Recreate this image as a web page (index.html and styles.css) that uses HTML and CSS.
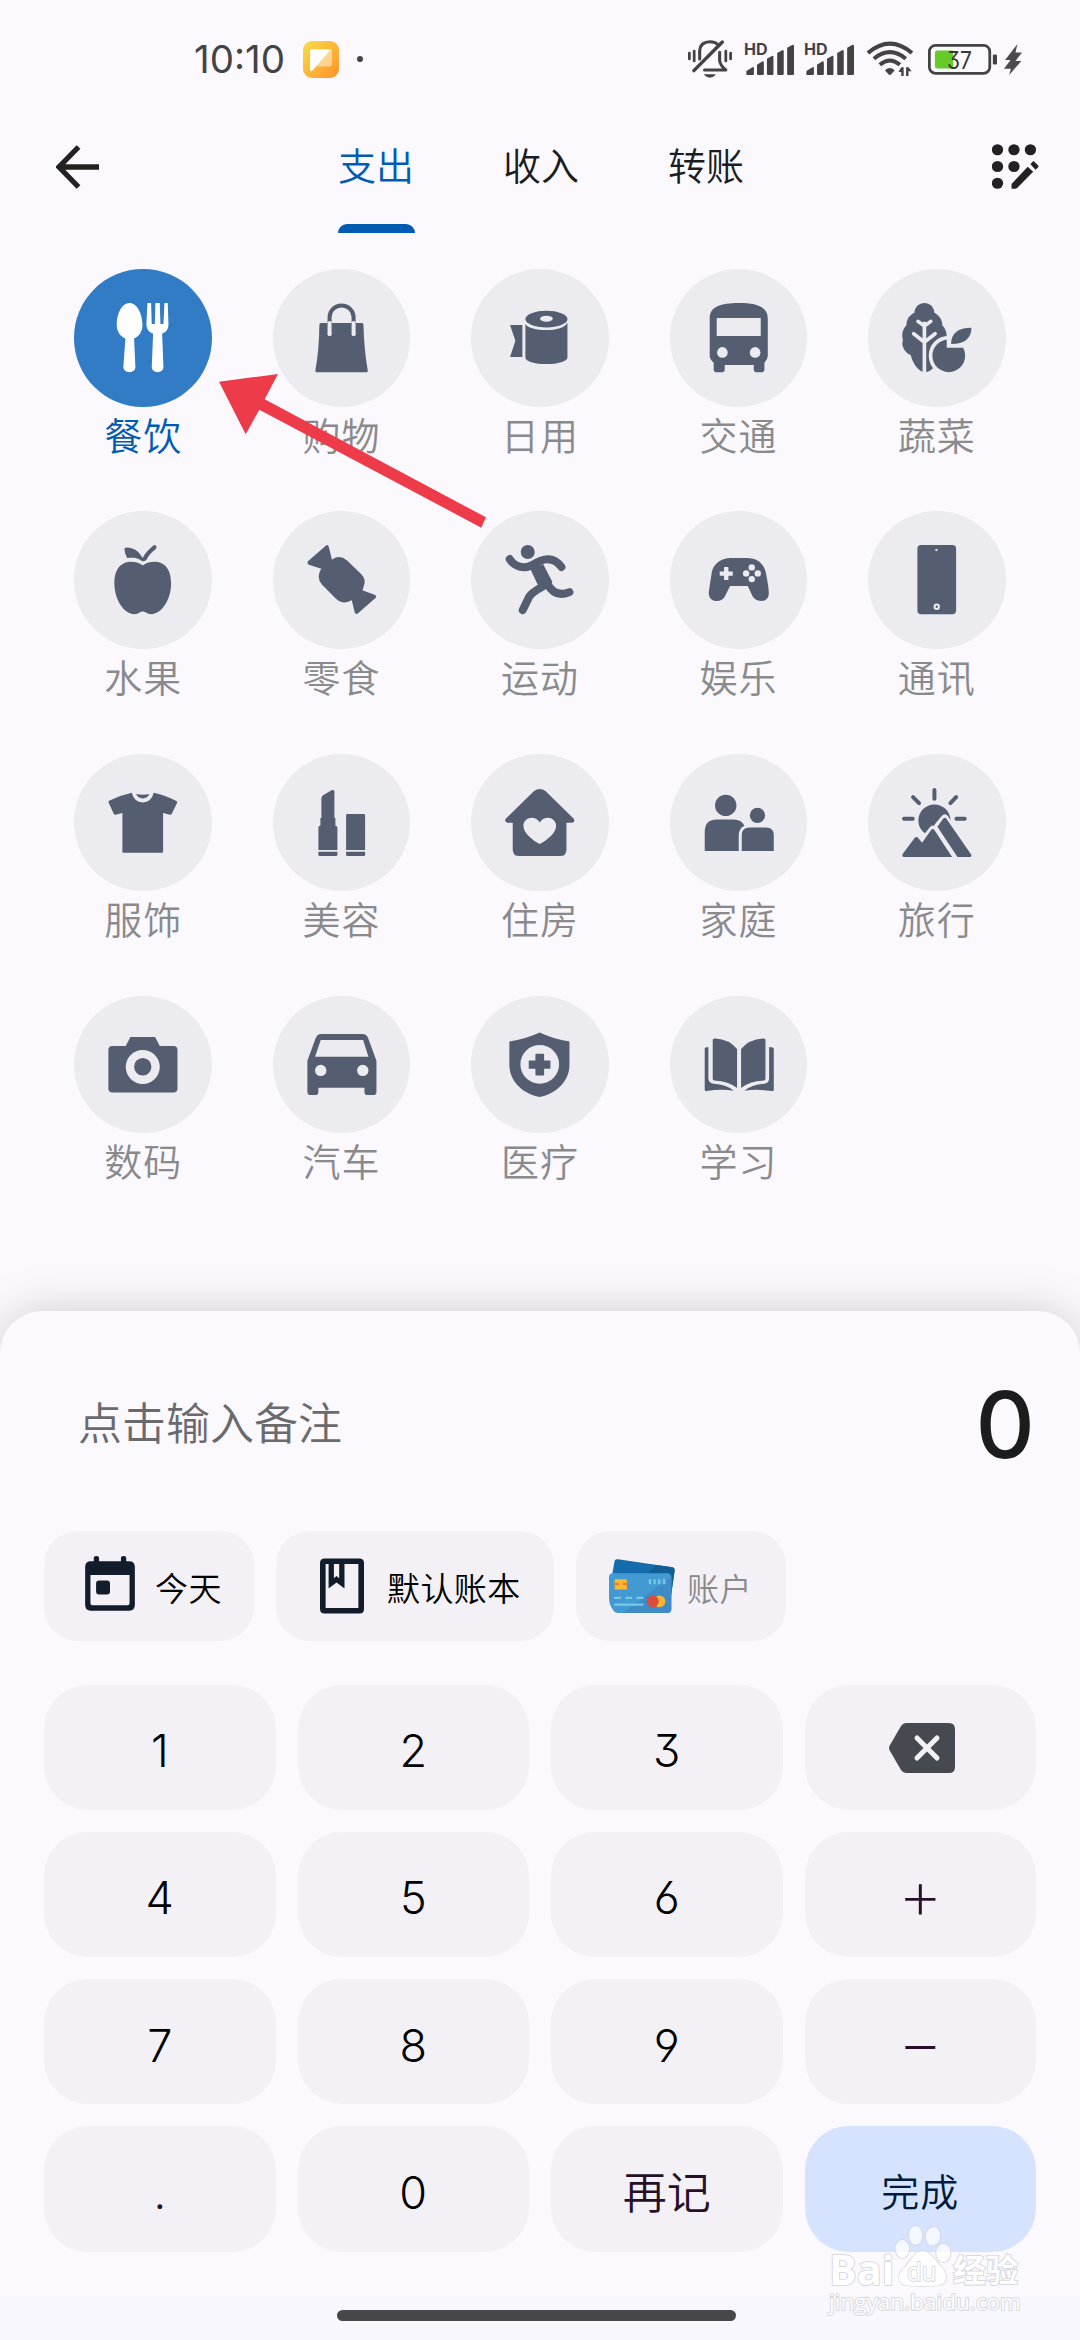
FILE: index.html
```html
<!DOCTYPE html>
<html lang="zh-CN">
<head>
<meta charset="utf-8">
<title>记账</title>
<link rel="stylesheet" href="styles.css">
</head>
<body>
<div class="status">
  <div class="status-left">
    <span class="time">10:10</span>
    <svg class="app-icon" viewBox="0 0 36 37"><defs><linearGradient id="ag" x1="0" y1="0" x2="1" y2="1"><stop offset="0" stop-color="#f9dd4a"/><stop offset="1" stop-color="#ff9028"/></linearGradient></defs><rect width="36" height="37" rx="9" fill="url(#ag)"/><path d="M12 25.500H26.500Q29 25.500 29 23V8.500H26Z" fill="#fff" opacity=".45"/><path d="M7 10Q7 8.200 9 8.200H28L9.500 29.500Q7 31.500 7 28.500Z" fill="#fffdf6"/></svg>
    <span class="dot"></span>
  </div>
  <div class="status-right">
    <svg class="bell" viewBox="430 120 128 120" preserveAspectRatio="none"><g fill="none" stroke="#434345" stroke-width="9" stroke-linecap="round"><path d="M464 180V155Q466 128 494 128Q508 128 515 135M522 160V185Q524 200 540 213H478" stroke-linejoin="round"/><path d="M447 215L530 129" stroke-width="10"/><path d="M434 162V180M448 156V186M540 156V186M554 162V180" stroke-width="8"/></g><path d="M476 226H511Q504 236 494 236Q483 236 476 226Z" fill="#434345"/></svg>
    <svg class="signal" viewBox="592 126 146 102" preserveAspectRatio="none"><text x="592" y="164" class="hd" textLength="69" lengthAdjust="spacingAndGlyphs">HD</text><g fill="#434345"><path d="M599 225V213L618 201Q621 201 621 204V222Q621 225 618 225ZM630 222V194L646 184Q650 184 650 188V222Q650 225 646 225H633Q630 225 630 222ZM659 222V176L675 167Q678 167 678 170V222Q678 225 675 225H662Q659 225 659 222ZM689 222V159L705 150Q708 150 708 153V222Q708 225 705 225H692Q689 225 689 222ZM718 222V143L734 134Q738 134 738 138V222Q738 225 734 225H721Q718 225 718 222Z"/></g></svg>
    <svg class="signal signal-2" viewBox="592 126 146 102" preserveAspectRatio="none"><text x="592" y="164" class="hd" textLength="69" lengthAdjust="spacingAndGlyphs">HD</text><g fill="#434345"><path d="M599 225V213L618 201Q621 201 621 204V222Q621 225 618 225ZM630 222V194L646 184Q650 184 650 188V222Q650 225 646 225H633Q630 225 630 222ZM659 222V176L675 167Q678 167 678 170V222Q678 225 675 225H662Q659 225 659 222ZM689 222V159L705 150Q708 150 708 153V222Q708 225 705 225H692Q689 225 689 222ZM718 222V143L734 134Q738 134 738 138V222Q738 225 734 225H721Q718 225 718 222Z"/></g></svg>
    <svg class="wifi" viewBox="950 126 133 108" preserveAspectRatio="none"><g fill="none" stroke="#434345" stroke-width="12"><path d="M953 162Q1016 106 1080 162M970 179Q1016 140 1062 179M987 197Q1016 172 1045 197"/></g><path d="M1002 214Q1016 200 1030 214L1020 226Q1016 230 1012 226ZM1049 205H1056V231H1049V219H1041ZM1063 231V205H1070L1079 217H1070V231Z" fill="#434345"/></svg>
    <svg class="battery" viewBox="1127 131 200 92" preserveAspectRatio="none"><rect x="1131" y="135" width="175" height="83" rx="18" fill="none" stroke="#434345" stroke-width="8"/><path d="M1154 150H1200V204H1154Q1147 204 1147 197V157Q1147 150 1154 150Z" fill="#66cb28"/><rect x="1315" y="162" width="12" height="30" rx="4" fill="#434345"/><text class="level" x="1182" y="204" textLength="72" lengthAdjust="spacingAndGlyphs">37</text></svg>
    <svg class="bolt" viewBox="1347 131 52 91" preserveAspectRatio="none"><path d="M1386 131L1350 178H1366L1347 204H1367L1362 222L1397 181H1380L1399 156H1380Z" fill="#4b4b4d"/></svg>
  </div>
</div>

<header class="header">
  <svg class="back" viewBox="0 0 43 44"><path d="M22.500 2L3 22L22.500 42M3 22H43" fill="none" stroke="#222" stroke-width="5.300"/></svg>
  <nav class="tabs"><span class="tab active">支出</span><span class="tab">收入</span><span class="tab">转账</span></nav>
  <svg class="edit" viewBox="1312 434 137 134" preserveAspectRatio="none"><g fill="#222"><circle cx="1328" cy="451" r="16.500"/><circle cx="1376" cy="451" r="16.500"/><circle cx="1424" cy="451" r="16.500"/><circle cx="1328" cy="501" r="16.500"/><circle cx="1376" cy="501" r="16.500"/><circle cx="1328" cy="551" r="16.500"/></g><path d="M1362 548L1430 478L1456 502L1390 574" fill="#fbf9fe"/><path d="M1369 553L1416 502L1432 517L1386 564Q1383 567 1379 567H1369ZM1424 494L1430 487Q1433 484 1437 488L1446 497Q1449 501 1446 504L1439 511Z" fill="#222"/></svg>
</header>

<main class="grid">
  <div class="cat selected"><svg viewBox="74 57 412 412"><path d="M240 159C262 159 279 190 279 224C279 246 268 260 254 265L258 350C258 360 250 366 240 366C230 366 222 360 222 350L228 265C214 260 202 246 202 224C202 190 218 159 240 159ZM294 159H305L307 222H316L318 159H331L333 222H342L345 159H355L357 222C357 238 350 247 338 251L342 350C342 360 334 366 325 366C315 366 307 360 307 350L311 251C299 247 291 238 291 222Z"/></svg><span>餐饮</span></div>
  <div class="cat"><svg viewBox="668 57 412 412"><path d="M807 224Q807 219 812 219H934Q939 219 939 224Q941 300 952 361Q953 366 948 366H799Q794 366 795 361Q806 300 807 224Z"/><path class="line" stroke-width="12" d="M837.500 219V202A36 36 0 0 1 909.500 202V219"/><path class="line cut" stroke-width="12" stroke-linecap="butt" d="M837.500 219V252M909.500 219V252"/><circle class="hole" cx="837.500" cy="252" r="6"/><circle class="hole" cx="909.500" cy="252" r="6"/></svg><span>购物</span></div>
  <div class="cat"><svg viewBox="1265 57 412 412"><path d="M1382 225H1419V321H1382L1398 272ZM1428 222C1436 234 1460 240 1491 240C1522 240 1546 233 1554 218V322C1554 334 1525 342 1491 342C1455 342 1428 334 1428 322Z"/><ellipse cx="1491" cy="207" rx="63" ry="25"/><ellipse class="hole" cx="1491" cy="206" rx="19" ry="9"/></svg><span>日用</span></div>
  <div class="cat"><svg viewBox="388 57 412 412"><path d="M507 205C507 170 540 159 594 159C648 159 681 170 681 205V318Q681 328 671 338V358Q671 366 663 366H647Q639 366 639 358V345H552V358Q552 366 544 366H527Q519 366 519 358V338Q507 328 507 318Z"/><path class="hole" d="M528 204H660V258H528Z"/><circle class="hole" cx="545" cy="307" r="16"/><circle class="hole" cx="643" cy="307" r="16"/></svg><span>交通</span></div>
  <div class="cat"><svg viewBox="986 57 412 412"><path d="M1155 159C1170 159 1184 170 1185 188C1196 194 1209 206 1209 226C1218 234 1222 246 1222 262L1200 310L1180 355Q1170 366 1155 366C1138 366 1120 340 1114 315C1098 308 1089 292 1089 280C1089 272 1092 268 1089 262C1087 245 1094 232 1101 226C1101 206 1112 194 1125 188C1126 170 1140 159 1155 159Z"/><path class="line cut" stroke-width="11" stroke-linecap="butt" d="M1155 220V368M1136 214L1155 228L1174 214M1123 251L1155 276L1187 251"/><circle class="hole" cx="1228" cy="317" r="60"/><circle cx="1228" cy="317" r="49"/><path class="hole" d="M1222 262H1290V288L1266 293H1222Z"/><path d="M1235 282C1235 250 1255 233 1296 233C1296 265 1275 282 1235 282Z"/></svg><span>蔬菜</span></div>

  <div class="cat"><svg viewBox="74 783 412 412"><path d="M280 946C300 930 365 920 365 1000C365 1050 335 1092 305 1092C293 1092 288 1084 280 1084C272 1084 267 1092 255 1092C225 1092 195 1050 195 1000C195 920 260 930 280 946ZM225 897Q225 892 232 892C255 893 270 905 280 924C285 912 295 900 311 887Q316 883 320 887Q323 892 319 897C305 908 297 918 292 928Q282 938 273 930C262 922 248 922 233 924Q226 910 225 897Z"/></svg><span>水果</span></div>
  <div class="cat"><svg viewBox="668 783 412 412"><path d="M845 928Q868 912 890 931L932 972Q948 988 940 1008L936 1022L905 1050Q878 1066 856 1045L815 1004Q796 984 812 957ZM772 934L826 887Q833 882 835 890L845 930L815 957L775 944Q769 940 772 934ZM934 1020L974 1035Q980 1039 975 1044L922 1090Q915 1094 913 1087L903 1047Z"/></svg><span>零食</span></div>
  <div class="cat"><svg viewBox="20 33 412 412"><circle cx="190" cy="156" r="21"/><path class="line" stroke-width="24" d="M136 177C150 200 178 209 204 195C240 170 270 171 291 201M175 330L194 291Q200 278 235 259M248 250Q272 295 315 276"/><path d="M197 205L236 192L264 246L248 268L220 254Z"/></svg><span>运动</span></div>
  <div class="cat"><svg viewBox="388 783 412 412"><path d="M570 924H620C652 924 670 944 675 967Q684 1010 684 1030C684 1045 674 1053 660 1053C648 1053 640 1046 635 1038L621 1008H568L553 1038C548 1048 540 1053 528 1053C514 1053 504 1044 504 1028Q508 1000 513 967C518 944 538 924 570 924Z"/><path class="hole" d="M550 951H563V964H576V977H563V990H550V977H537V964H550Z"/><g class="hole"><circle cx="633" cy="952" r="9.500"/><circle cx="633" cy="987" r="9.500"/><circle cx="616" cy="970" r="9.500"/><circle cx="651" cy="970" r="9.500"/></g></svg><span>娱乐</span></div>
  <div class="cat"><svg viewBox="986 783 412 412"><rect x="1134" y="885" width="116" height="207" rx="11"/><rect class="hole" x="1188" y="897" width="6" height="6"/><circle class="line cut" cx="1192" cy="1070" r="6.500" stroke-width="6"/></svg><span>通讯</span></div>

  <div class="cat"><svg viewBox="74 42 412 412"><path d="M247 158Q210 166 179 182Q176 184 178 188L193 221Q195 225 199 224L219 219V335Q219 338 222 338H338Q341 338 341 335V219L361 224Q365 225 367 221L383 188Q384 184 381 183Q350 166 313 158Q306 186 280 187Q254 186 247 158Z"/><path d="M260 162Q280 166 300 162Q294 175 280 175Q266 175 260 162Z"/></svg><span>服饰</span></div>
  <div class="cat"><svg viewBox="668 42 412 412"><path d="M813 175Q814 168 819 165L845 150Q852 148 852 154V234H855V258Q861 258 861 262V330H804V262Q804 258 810 256V234H813ZM804 335H861V344Q861 348 857 348H808Q804 348 804 344ZM887 330V226Q887 222 891 222H940Q944 222 944 226V330ZM887 335H944V344Q944 348 940 348H891Q887 348 887 344Z"/></svg><span>美容</span></div>
  <div class="cat"><svg viewBox="1265 42 412 412"><path d="M1471 147Q1480 147 1488 153L1573 236Q1578 247 1568 248H1551V328Q1551 348 1531 348H1410Q1390 348 1390 328V248H1374Q1364 245 1369 236L1454 153Q1462 147 1471 147Z"/><path class="hole" d="M1471 312C1450 300 1422 280 1422 257C1422 233 1455 222 1471 247C1487 222 1520 233 1520 257C1520 280 1492 300 1471 312Z"/></svg><span>住房</span></div>
  <div class="cat"><svg viewBox="388 42 412 412"><circle cx="555" cy="196" r="32"/><circle cx="650" cy="226" r="23"/><path d="M492 333V275Q492 238 529 238H578Q602 238 611 257Q594 265 594 285V333ZM603 333V285Q603 262 626 262H676Q699 262 699 285V333Z"/></svg><span>家庭</span></div>
  <div class="cat"><svg viewBox="986 42 412 412"><circle cx="1185" cy="241" r="48"/><path class="line" stroke-width="12" d="M1185 150V176M1121 171L1139 189M1250 171L1233 189M1094 236H1120M1251 236H1276"/><g stroke="#ebebf0" stroke-width="22" stroke-linejoin="round"><path d="M1094 351L1131 293L1148 308L1180 268L1238 351ZM1194 260L1216 234L1290 351H1254Z"/></g><path d="M1094 351Q1086 350 1090 342L1126 293Q1131 288 1136 293L1148 308L1175 270Q1180 264 1185 270L1238 351ZM1194 260L1211 236Q1216 230 1221 236L1295 343Q1298 350 1290 351H1254Z"/></svg><span>旅行</span></div>

  <div class="cat"><svg viewBox="74 768 412 412"><path d="M189 918H229L243 891H317L331 918H372Q384 918 384 930V1045Q384 1057 372 1057H189Q177 1057 177 1045V930Q177 918 189 918Z"/><circle class="hole" cx="280" cy="981" r="51"/><circle cx="280" cy="980" r="26"/></svg><span>数码</span></div>
  <div class="cat"><svg viewBox="668 768 412 412"><path d="M796 894Q801 882 812 882H936Q948 882 953 894L978 962V1055Q978 1065 968 1065H952Q942 1065 942 1055V1043H804V1055Q804 1065 794 1065H781Q771 1065 771 1055V962Z"/><path class="hole" d="M811 900H938L954 950H794Z"/><circle class="hole" cx="811" cy="991" r="17"/><circle class="hole" cx="937" cy="991" r="17"/></svg><span>汽车</span></div>
  <div class="cat"><svg viewBox="1265 768 412 412"><path d="M1471 877Q1510 896 1560 904V975C1560 1020 1525 1060 1471 1071C1415 1060 1380 1020 1380 975V904Q1430 896 1471 877Z"/><circle class="hole" cx="1471" cy="973" r="58"/><path d="M1460 941H1482Q1484 941 1484 943V961H1501Q1503 961 1503 963V984Q1503 986 1501 986H1484V1004Q1484 1006 1482 1006H1460Q1458 1006 1458 1004V986H1440Q1438 986 1438 984V963Q1438 961 1440 961H1458V943Q1458 941 1460 941Z"/></svg><span>医疗</span></div>
  <div class="cat"><svg viewBox="388 768 412 412"><path d="M516 899Q516 895 524 895Q565 897 589 927V1044Q565 1023 520 1021Q516 1020 516 1016ZM674 899Q674 895 666 895Q625 897 601 927V1044Q625 1023 670 1021Q674 1020 674 1016ZM492 926Q492 921 503 921V1014Q503 1029 518 1031Q560 1034 579 1052Q540 1046 498 1053Q492 1054 492 1048ZM699 926Q699 921 685 921V1014Q685 1029 672 1031Q632 1034 611 1052Q650 1046 693 1053Q699 1054 699 1048Z"/></svg><span>学习</span></div>
</main>

<section class="sheet">
  <div class="note"><span>点击输入备注</span><strong>0</strong></div>
  <div class="chips">
    <div class="chip"><svg class="cal" viewBox="135 77 150 166"><path fill="#131c2b" fill-rule="evenodd" d="M152 93H161V84Q161 77 169 77Q177 77 177 84V93H243V84Q243 77 251 77Q259 77 259 84V93H268Q285 93 285 110V225Q285 242 268 242H152Q135 242 135 225V110Q135 93 152 93ZM151 134V218Q151 226 159 226H261Q269 226 269 218V134ZM177 151H201Q210 151 210 160V184Q210 193 201 193H177Q168 193 168 184V160Q168 151 177 151Z"/></svg><span>今天</span></div>
    <div class="chip chip-book"><svg class="ledger" viewBox="841 84 133 167"><path fill="#131c2b" fill-rule="evenodd" d="M855 84H960Q974 84 974 98V237Q974 251 960 251H855Q841 251 841 237V98Q841 84 855 84ZM858 101V234H957V101H915V175L891 157L867 175V101ZM883 101V144L891 137L899 144V101Z"/></svg><span>默认账本</span></div>
    <div class="chip chip-acct"><svg class="card" viewBox="87 86 199 163"><path d="M104 91Q107 86 114 87L278 111Q286 113 285 121L273 205L97 130Z" fill="#146cac"/><path d="M204 130L230 104L278 111Q286 113 285 121L273 205Z" fill="#125f98"/><path d="M99 129H262Q275 129 275 141V237Q275 249 262 249H114Q104 249 99 240Q87 222 87 205V141Q87 129 99 129Z" fill="#4399d2"/><path d="M128 249L275 140V237Q275 249 262 249Z" fill="#3f8bc8"/><rect x="104" y="147" width="37" height="31" rx="2" fill="#fdb62f"/><path d="M104 158H116V165H104ZM129 158H141V165H129Z" fill="#f07c2b"/><path d="M207 147H214V162H207ZM221 147H228V162H221ZM235 147H242V162H235ZM250 147H257V162H250ZM102 200H123V207H102ZM136 200H157V207H136ZM170 200H191V207H170ZM102 220H191V227H102Z" fill="#76c9e3"/><circle cx="239" cy="214" r="18" fill="#fdb62f"/><circle cx="219" cy="214" r="18" fill="#dc4c3c"/></svg><span>账户</span></div>
  </div>
  <div class="keys">
    <div class="key">1</div><div class="key">2</div><div class="key">3</div>
    <div class="key"><svg class="del" viewBox="0 0 66 50"><path d="M17 0H60Q66 0 66 6V44Q66 50 60 50H17Q14 50 12 47L1 28Q-1 25 1 22L12 3Q14 0 17 0Z" fill="#464a50"/><path d="M28 15L48 35M48 15L28 35" stroke="#f3f1f6" stroke-width="5" stroke-linecap="round"/></svg></div>
    <div class="key">4</div><div class="key">5</div><div class="key">6</div><div class="key op">+</div>
    <div class="key">7</div><div class="key">8</div><div class="key">9</div><div class="key op">−</div>
    <div class="key point">.</div><div class="key">0</div><div class="key again">再记</div><div class="key done">完成</div>
  </div>
  <div class="navbar"><span class="home"></span></div>
</section>

<svg class="arrow" viewBox="507 372 802 462"><path d="M507 395L684 372L644 448L1308 802L1294 833L628 479L587 553Z" fill="#ed3b49"/></svg>

<svg class="mark" viewBox="140 365 590 290">
  <g fill="#fff" stroke="#d2d2da" stroke-width="4" paint-order="stroke"><g fill-opacity=".75"><ellipse cx="366" cy="446" rx="21" ry="28"/><ellipse cx="406" cy="405" rx="20" ry="29"/><ellipse cx="458" cy="408" rx="22" ry="28" transform="rotate(8 458 408)"/><ellipse cx="489" cy="458" rx="22" ry="28"/></g><path d="M427 452C450 452 462 478 480 496C510 525 500 555 468 556C450 557 400 557 386 556C352 555 345 525 374 500C392 480 402 452 427 452Z"/></g>
  <text class="wm bai" x="146" y="553" textLength="196" lengthAdjust="spacingAndGlyphs">Bai</text>
  <text class="wm du" x="380" y="541" textLength="88" lengthAdjust="spacingAndGlyphs">du</text>
  <text class="wm exp" x="518" y="545" textLength="196" lengthAdjust="spacingAndGlyphs">经验</text>
  <text class="wm url" x="146" y="630" textLength="576" lengthAdjust="spacingAndGlyphs">jingyan.baidu.com</text>
</svg>
</body>
</html>
```
FILE: styles.css
```css
* { box-sizing: border-box; }
body {
  margin: 0;
  width: 1080px;
  height: 2340px;
  display: flex;
  flex-direction: column;
  position: relative;
  overflow: hidden;
  background: #fbf9fe;
  color: #1a1c1e;
  font-family: Inter, "Noto Sans CJK SC", sans-serif;
}
svg { display: block; flex: none; }

.status {
  height: 118px;
  flex: none;
  display: flex;
  justify-content: space-between;
  padding: 0 58px 0 194px;
  align-items: center;
}
.status-left, .status-right { display: flex; align-items: center; }
.time { font-size: 38.500px; letter-spacing: 0; color: #434345; width: 109px; white-space: nowrap; }
.app-icon { width: 36px; height: 37px; }
.dot { width: 6px; height: 6px; border-radius: 50%; background: #434345; margin-left: 18px; }
.bell { width: 44px; height: 40px; margin-right: 12px; }
.signal { width: 50px; height: 34px; margin-right: 10px; overflow: visible; }
.signal-2 { margin-right: 13px; }
.wifi { width: 46px; height: 36px; margin-right: 15px; }
.battery { width: 69px; height: 31px; margin-right: 7px; }
.bolt { width: 18px; height: 31px; }
.hd { font: 700 47px Inter, sans-serif; fill: #434345; }
.level { font: 400 70px Inter, sans-serif; fill: #38383a; font-feature-settings: "cv09"; }

.header {
  height: 115px;
  flex: none;
  display: flex;
  justify-content: space-between;
  padding: 0 41px 0 56px;
}
.back { width: 43px; height: 44px; margin-top: 27px; }
.edit { width: 47px; height: 45px; margin-top: 26px; }
.tabs { display: flex; gap: 88px; margin-right: 9px; }
.tab {
  width: 77px;
  padding-top: 21px;
  font-size: 38px;
  font-weight: 350;
  line-height: 54px;
  text-align: center;
  white-space: nowrap;
  display: flex;
  flex-direction: column;
  justify-content: space-between;
}
.tab.active { color: #005cb2; }
.tab.active::after { content: ""; height: 9px; border-radius: 9px 9px 0 0; background: #005cb2; }

.grid {
  display: grid;
  grid-template-columns: repeat(5, 1fr);
  grid-auto-rows: 242.3px;
  padding: 36px 44px 0;
}
.cat { display: flex; flex-direction: column; align-items: center; font-weight: 350; }
.cat svg { width: 137.5px; height: 137.5px; border-radius: 50%; background: #ebebf0; fill: #555e71; }
.cat span { font-size: 38px; line-height: 56px; letter-spacing: 1px; margin-top: 1px; color: #8a8a8d; }
.selected svg { background: #327bc5; fill: #fff; }
.cat.selected span { color: #005cb2; }
.cat .line { fill: none; stroke: #555e71; stroke-linecap: round; }
.cat .cut { stroke: #ebebf0; }
.cat .hole { fill: #ebebf0; }

.sheet {
  margin-top: auto;
  height: 1029px;
  flex: none;
  display: flex;
  flex-direction: column;
  border-radius: 42px 42px 0 0;
  background: #fbf9fe;
  box-shadow: 0 0 48px rgba(0, 0, 0, .18);
  overflow: hidden;
}
.note {
  height: 220px;
  padding: 4px 45px 0 78px;
  display: flex;
  justify-content: space-between;
  align-items: center;
}
.note span { font-size: 44px; color: #6a6a6d; font-weight: 350; margin-top: -4px; }
.note strong { font-size: 92px; font-weight: 500; line-height: 110px; margin-top: 3px; }
.chips { display: flex; gap: 22px; padding: 0 44px; height: 110px; }
.chip {
  width: 210px;
  border-radius: 34px;
  background: #f3f1f6;
  display: flex;
  align-items: center;
  padding-left: 41px;
  font-size: 33px;
  color: #000;
  white-space: nowrap;
}
.chip span { margin-top: 1px; font-weight: 350; letter-spacing: .4px; }
.cal { width: 50px; height: 55px; margin: -6px 20px 0 0; }
.chip-book { width: 278px; padding-left: 44px; }
.ledger { width: 44px; height: 56px; margin-right: 23px; }
.chip-acct { padding-left: 33px; color: #8a8a8d; }
.chip-acct span { font-size: 32px; }
.card { width: 66px; height: 54px; margin-right: 12px; }

.keys {
  display: grid;
  grid-template-columns: repeat(4, 1fr);
  grid-auto-rows: 125.3px;
  gap: 22px;
  padding: 43.500px 44px 0;
}
.key {
  border-radius: 44px;
  background: #f3f1f6;
  display: flex;
  align-items: center;
  justify-content: center;
  padding-top: 7px;
  color: #000;
  font-size: 45px;
  font-weight: 300;
  font-feature-settings: "cv03", "cv04", "cv09";
}
.op { color: #261028; font-size: 70px; font-weight: 200; line-height: 80px; padding-top: 0; }
.point { color: #261028; }
.again { color: #261028; font-size: 44px; font-weight: 350; padding-top: 1px; }
.done { background: #d6e3ff; color: #001b3e; font-size: 38px; letter-spacing: 1px; font-weight: 350; padding-top: 0; }
.del { width: 66px; height: 50px; margin: -5px 0 0 3px; }

.navbar {
  margin-top: auto;
  height: 44px;
  flex: none;
  background: #f7f7fd;
  padding: 14px 0 0 337px;
}
.home { display: block; width: 399px; height: 11px; border-radius: 6px; background: #47474a; }

.arrow { position: absolute; left: 219px; top: 374px; width: 267.300px; height: 154px; }
.mark { position: absolute; left: 826.700px; top: 2221.700px; width: 196.700px; height: 96.700px; }
.wm { fill: #fff; stroke: #d2d2da; stroke-width: 5px; paint-order: stroke; font-family: "Open Sans", "Noto Sans CJK SC", sans-serif; }
.bai { font-size: 126px; font-weight: 700; }
.du { font-size: 78px; }
.exp { font-size: 96px; font-weight: 700; }
.url { font-size: 66px; }
```
